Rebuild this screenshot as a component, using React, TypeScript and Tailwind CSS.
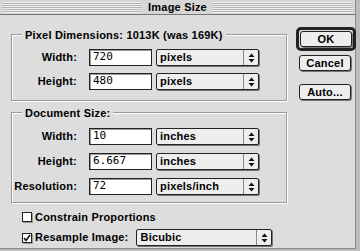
import { ReactNode } from "react";

const label = "font-['Liberation_Sans',sans-serif] font-bold text-[11px] text-black tracking-[0.2px]";

function Field({ value }: { value: string }) {
  return (
    <div className="w-[63px] h-[17px] bg-white border border-[#222] shadow-[inset_1px_1px_0_#999] flex items-center pl-[3px] font-['DejaVu_Sans_Mono',monospace] text-[11px] text-black">
      {value}
    </div>
  );
}

function Arrows() {
  return (
    <svg width="7" height="10" viewBox="0 0 7 10">
      <path d="M3.5 0.5 L6.5 4 L0.5 4 Z" fill="#111" />
      <path d="M3.5 9.5 L6.5 6 L0.5 6 Z" fill="#111" />
    </svg>
  );
}

function Popup({ text, w = "w-[103px]" }: { text: string; w?: string }) {
  return (
    <div className={`${w} h-[17px] bg-[#eeeeee] border border-[#222] rounded-[2px] shadow-[1px_1px_0_#777] flex items-stretch`}>
      <div className={`flex-1 flex items-center pl-[3px] ${label}`}>{text}</div>
      <div className="w-[15px] border-l border-[#888] flex items-center justify-center">
        <Arrows />
      </div>
    </div>
  );
}

function Row({ name, value, unit }: { name: string; value: string; unit: string }) {
  return (
    <div className="flex items-center h-[17px]">
      <div className={`w-[65px] text-right ${label}`}>{name}</div>
      <div className="w-[12px]" />
      <Field value={value} />
      <div className="w-[4px]" />
      <Popup text={unit} />
    </div>
  );
}

function Group({ title, children, pad }: { title: string; children: ReactNode; pad: string }) {
  return (
    <div className={`relative w-[276px] border border-[#9a9a9a] shadow-[1px_1px_0_#fff,inset_1px_1px_0_#fff] ${pad}`}>
      <span className={`absolute left-[10px] top-[-8px] bg-[#dddddd] px-[3px] ${label}`}>{title}</span>
      {children}
    </div>
  );
}

function Button({ text }: { text: string }) {
  return (
    <div className={`w-[52px] h-[16px] bg-[#eeeeee] border border-[#222] rounded-[3px] shadow-[1px_1px_0_#777] flex items-center justify-center ${label}`}>
      {text}
    </div>
  );
}

function Check({ checked }: { checked?: boolean }) {
  return (
    <div className="w-[10px] h-[10px] bg-white border border-[#222] shadow-[1px_1px_0_#999] flex items-center justify-center">
      {checked && (
        <svg width="8" height="8" viewBox="0 0 8 8">
          <path d="M1 4 L3 6.5 L7 1" stroke="#111" strokeWidth="1.5" fill="none" />
        </svg>
      )}
    </div>
  );
}

export default function App() {
  return (
    <div className="w-[360px] h-[251px] bg-[#bdbdbd] flex">
      <div className="w-[356px] h-[249px] bg-[#dddddd] border-r border-b border-[#888] flex flex-col">
        {/* title bar */}
        <div className="h-[15px] bg-[#d6d6d6] border-b border-[#777] flex items-center px-[2px]">
          <div className="flex-1 h-[11px] bg-[repeating-linear-gradient(to_bottom,#efefef_0px,#efefef_1px,#b4b4b4_1px,#b4b4b4_2px)]" />
          <div className={`px-[6px] ${label}`}>Image Size</div>
          <div className="flex-1 h-[11px] bg-[repeating-linear-gradient(to_bottom,#efefef_0px,#efefef_1px,#b4b4b4_1px,#b4b4b4_2px)]" />
        </div>

        <div className="flex">
          <div className="pl-[11px] pt-[19px]">
            <Group title="Pixel Dimensions: 1013K (was 169K)" pad="pt-[14px] pb-[10px]">
              <div className="flex flex-col gap-[7px]">
                <Row name="Width:" value="720" unit="pixels" />
                <Row name="Height:" value="480" unit="pixels" />
              </div>
            </Group>
            <div className="h-[11px]" />
            <Group title="Document Size:" pad="pt-[15px] pb-[7px]">
              <div className="flex flex-col gap-[8px]">
                <Row name="Width:" value="10" unit="inches" />
                <Row name="Height:" value="6.667" unit="inches" />
                <Row name="Resolution:" value="72" unit="pixels/inch" />
              </div>
            </Group>
            <div className="pl-[11px] pt-[8px] flex flex-col gap-[6px]">
              <div className="flex items-center gap-[3px] h-[12px]">
                <Check />
                <span className={label}>Constrain Proportions</span>
              </div>
              <div className="flex items-center gap-[3px] h-[17px]">
                <Check checked />
                <span className={label}>Resample Image:</span>
                <div className="w-[2px]" />
                <Popup text="Bicubic" w="w-[136px]" />
              </div>
            </div>
          </div>

          <div className="pl-[9px] pt-[12px] flex flex-col items-start">
            <div className="border-[3px] border-[#222] rounded-[5px] p-[1px]">
              <Button text="OK" />
            </div>
            <div className="h-[4px]" />
            <div className="pl-[3px]">
              <Button text="Cancel" />
            </div>
            <div className="h-[13px]" />
            <div className="pl-[3px]">
              <Button text="Auto..." />
            </div>
          </div>
        </div>
      </div>
    </div>
  );
}
